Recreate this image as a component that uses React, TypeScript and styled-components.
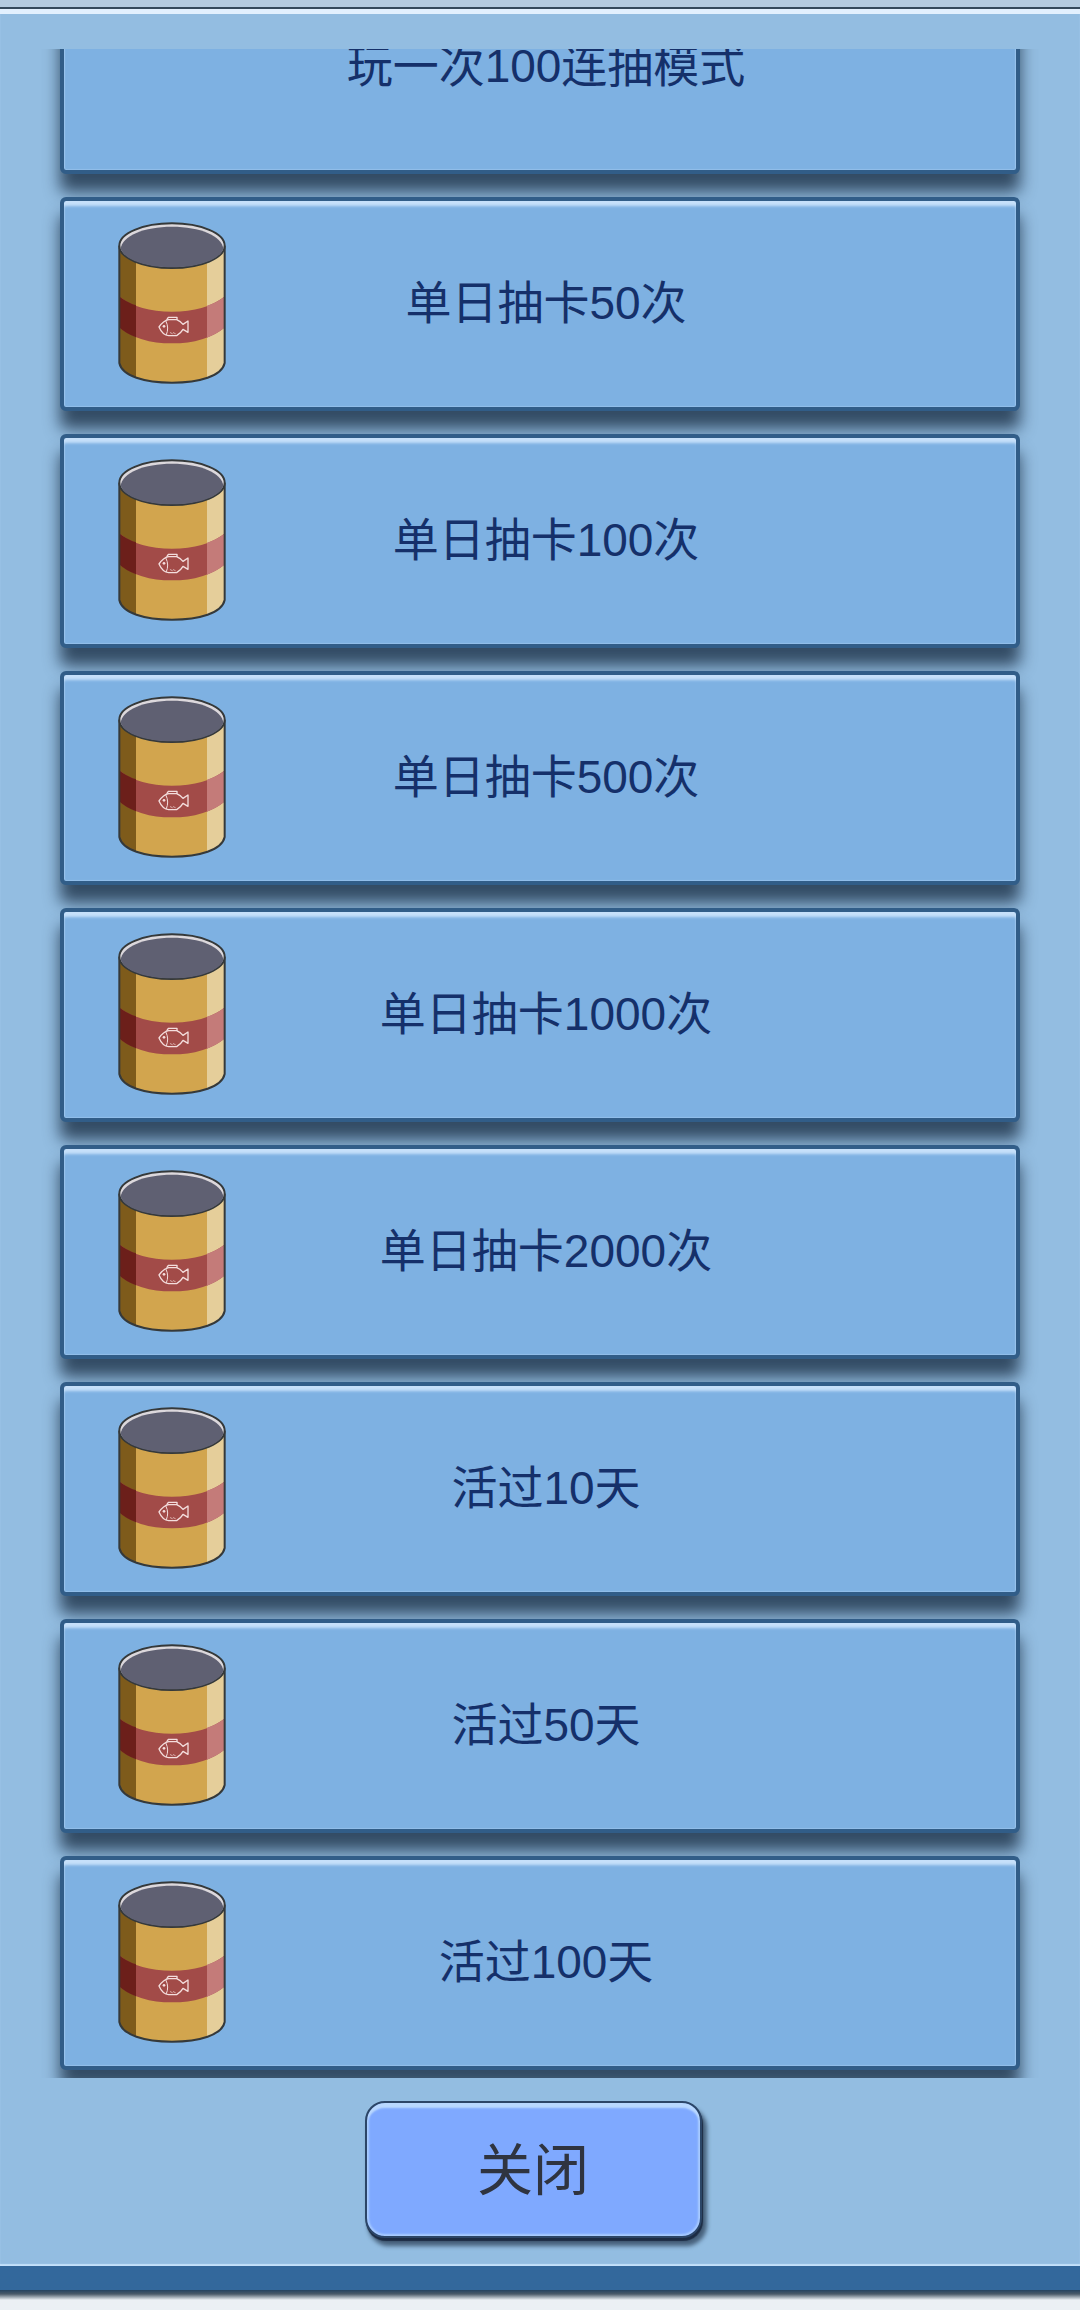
import React from "react";
import styled, { createGlobalStyle } from "styled-components";

const GlobalStyle = createGlobalStyle`
  *, *::before, *::after { box-sizing: border-box; }
  body {
    margin: 0;
    background: linear-gradient(#b4cbe0 50%, #ebf0f4 50%);
    font-family: "Liberation Sans", "Noto Sans CJK SC", sans-serif;
  }
`;

const Screen = styled.main`
  display: flex;
  flex-direction: column;
  height: 100vh;
  padding: 7px 0 10px;
`;

const Panel = styled.section`
  flex: 1;
  min-height: 0;
  display: flex;
  flex-direction: column;
  padding-top: 35px;
  background: #93bde1;
  border-top: 2px solid #34495c;
  border-bottom: 24px solid #33689c;
  box-shadow:
    inset 0 5px 0 #e2f0fe,
    inset 0 -2px 1px #c4e0fa;
`;

const PanelShade = styled.div`
  height: 10px;
  background: linear-gradient(#24425e, #4a5a68 40%, #ebf0f4);
`;

/* Reversed column, so the list opens scrolled to its newest entries. */
const Scroller = styled.div`
  flex: 1;
  min-height: 0;
  display: flex;
  flex-direction: column-reverse;
  overflow-x: hidden;
  overflow-y: auto;
  scrollbar-width: none;
  margin-top: 5px;
`;

const List = styled.ul`
  flex: none;
  display: flex;
  flex-direction: column;
  gap: 23px;
  margin: 0;
  padding: 8px 60px 8px 60px;
  list-style: none;
`;

const Card = styled.li`
  display: flex;
  align-items: center;
  position: relative;
  height: 214px;
  padding: 0 150px 2px 54px;
  border: 4px solid #315d88;
  border-radius: 6px;
  background: #7eb1e2;
  box-shadow:
    inset 0 6px 3px -1px #c6e0fa,
    inset 0 0 1px 1px #93bfea,
    0 18px 16px rgba(6, 22, 42, 0.68);
`;

const CardTitle = styled.span`
  flex: 1;
  color: #15306a;
  font-size: 46px;
  line-height: 60px;
  text-align: center;
  white-space: nowrap;
`;

const IconSlot = styled.div`
  flex: none;
  width: 108px;
  height: 162px;
`;

const CanSvg = styled.svg`
  display: block;
  width: 100%;
  height: 100%;
`;

const Footer = styled.footer`
  display: flex;
  justify-content: center;
  padding: 23px 14px 28px 0;
`;

const CloseButton = styled.button`
  width: 337px;
  height: 137px;
  padding: 2px 0 0;
  border: 2px solid #2c4668;
  border-radius: 20px;
  background: #7fa9ff;
  color: #2f3440;
  font-family: inherit;
  font-size: 56px;
  line-height: 72px;
  box-shadow:
    inset 0 6px 2px -1px #b9d8ff,
    inset 0 0 2px 2px #a9ccff,
    1px 3px 1px #1c2c44,
    4px 7px 4px 1px rgba(20, 35, 55, 0.6);
  cursor: pointer;
`;

function Can() {
  return (
    <CanSvg viewBox="0 0 324 486" aria-hidden="true">
      <defs>
        <clipPath id="can-body">
          <path d="M4 71V423C12 462 80 482 162 482S312 462 320 423V71Z" />
        </clipPath>
      </defs>
      <g clipPath="url(#can-body)">
        <rect width="324" height="486" fill="#d2a54e" />
        <rect width="54" height="486" fill="#7e5b1b" />
        <rect x="267" width="57" height="486" fill="#e5ce9a" />
        <path d="M0 220Q60 269 162 269T324 220V313Q264 364 162 364T0 313Z" fill="#a24b48" />
        <path d="M0 220Q22 239 54 250V346Q22 334 0 313Z" fill="#6c1f1a" />
        <path d="M324 220Q302 239 267 251V347Q302 334 324 313Z" fill="#c47b79" />
      </g>
      <path d="M4 71V423C12 462 80 482 162 482S312 462 320 423V71" fill="none" stroke="#35393a" strokeWidth="6" />
      <ellipse cx="162" cy="71" rx="158" ry="67" fill="#dcd8dc" stroke="#35393a" strokeWidth="6" />
      <path d="M8 80C12 42 78 14 162 14S312 42 316 80C305 114 240 136 162 136S19 114 8 80Z" fill="#5f6072" />
      <g fill="none" stroke="#f4dedd" strokeWidth="4" strokeLinejoin="round" strokeLinecap="round">
        <path d="M123 315Q136 296 152 293H176Q188 298 195 307L210 297V331L195 322Q188 334 176 341H152Q134 340 123 315Z" />
        <path d="M147 292L151 286H177V292" />
        <path d="M144 298Q154 318 145 338" strokeWidth="3" />
        <path d="M157 332L163 335M166 332L172 335" strokeWidth="2" />
      </g>
      <circle cx="138" cy="313" r="4" fill="#f4dedd" />
    </CanSvg>
  );
}

const achievements = [
  { title: "玩一次100连抽模式", hasCan: false },
  { title: "单日抽卡50次", hasCan: true },
  { title: "单日抽卡100次", hasCan: true },
  { title: "单日抽卡500次", hasCan: true },
  { title: "单日抽卡1000次", hasCan: true },
  { title: "单日抽卡2000次", hasCan: true },
  { title: "活过10天", hasCan: true },
  { title: "活过50天", hasCan: true },
  { title: "活过100天", hasCan: true },
];

export default function App() {
  return (
    <>
      <GlobalStyle />
      <Screen lang="zh-CN">
        <Panel>
          <Scroller>
            <List>
              {achievements.map(({ title, hasCan }) => (
                <Card key={title}>
                  <IconSlot>{hasCan && <Can />}</IconSlot>
                  <CardTitle>{title}</CardTitle>
                </Card>
              ))}
            </List>
          </Scroller>
          <Footer>
            <CloseButton type="button">关闭</CloseButton>
          </Footer>
        </Panel>
        <PanelShade />
      </Screen>
    </>
  );
}
